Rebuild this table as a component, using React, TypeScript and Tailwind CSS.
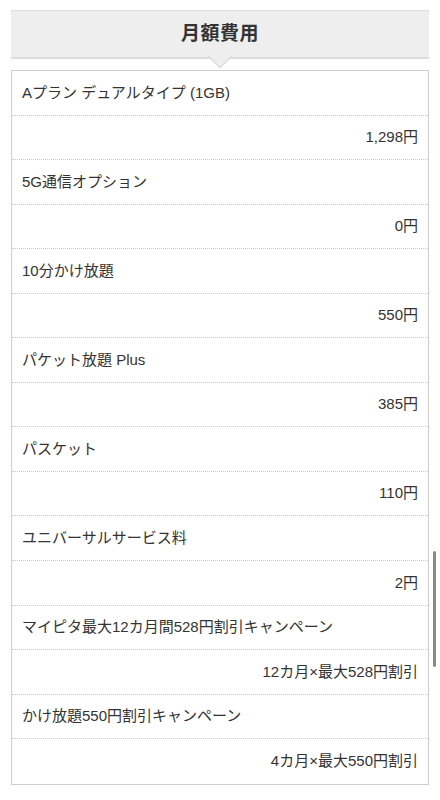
import React from 'react';

const items: { name: string; price: string }[] = [
  { name: 'Aプラン デュアルタイプ (1GB)', price: '1,298円' },
  { name: '5G通信オプション', price: '0円' },
  { name: '10分かけ放題', price: '550円' },
  { name: 'パケット放題 Plus', price: '385円' },
  { name: 'パスケット', price: '110円' },
  { name: 'ユニバーサルサービス料', price: '2円' },
  { name: 'マイピタ最大12カ月間528円割引キャンペーン', price: '12カ月×最大528円割引' },
  { name: 'かけ放題550円割引キャンペーン', price: '4カ月×最大550円割引' },
];

export default function App() {
  const rows = items.flatMap((it) => [
    { text: it.name, right: false },
    { text: it.price, right: true },
  ]);

  return (
    <div
      className="relative w-[440px] h-[800px] bg-white overflow-hidden text-[#333]"
      style={{ fontFamily: '"Liberation Sans", "Noto Sans CJK JP", sans-serif' }}
    >
      <div className="pt-[10px] px-[11px]">
        {/* header */}
        <div className="relative h-[49px] bg-[#eeeeee] border-t border-b-2 border-[#dcdcdc] flex items-center justify-center">
          <h2 className="text-[19px] font-bold tracking-[0.5px] text-[#333]">月額費用</h2>
          <svg
            className="absolute left-1/2 -translate-x-1/2 top-full -mt-[2px]"
            width="24"
            height="13"
            viewBox="0 0 24 13"
          >
            <path d="M0 0 L12 12 L24 0 Z" fill="#eeeeee" />
            <path d="M0 1 L12 12.5 L24 1" fill="none" stroke="#dcdcdc" strokeWidth="1.5" />
            <rect x="0" y="0" width="24" height="1.2" fill="#eeeeee" />
          </svg>
        </div>

        {/* table */}
        <div className="mt-[11px] border border-[#cfcfcf]">
          {rows.map((r, i) => (
            <div
              key={i}
              className={`h-[44.56px] flex items-center px-[10px] text-[15px] ${
                r.right ? 'justify-end' : 'justify-start'
              } ${i < rows.length - 1 ? 'border-b border-dotted border-[#c8c8c8]' : ''}`}
            >
              {r.text}
            </div>
          ))}
        </div>
      </div>

      {/* overlay scrollbar */}
      <div className="absolute left-[433px] top-[551px] w-[3px] h-[116px] rounded-full bg-[#8a8a8a]" />
    </div>
  );
}
